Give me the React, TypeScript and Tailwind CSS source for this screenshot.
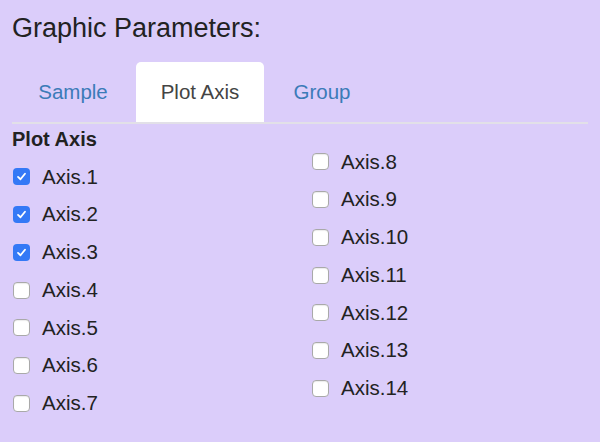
import React from "react";

const left = [
  { name: "Axis.1", on: true },
  { name: "Axis.2", on: true },
  { name: "Axis.3", on: true },
  { name: "Axis.4", on: false },
  { name: "Axis.5", on: false },
  { name: "Axis.6", on: false },
  { name: "Axis.7", on: false },
];

const right = ["Axis.8", "Axis.9", "Axis.10", "Axis.11", "Axis.12", "Axis.13", "Axis.14"].map((name) => ({
  name,
  on: false,
}));

function Box({ on }: { on: boolean }) {
  if (on) {
    return (
      <span className="flex h-[17px] w-[17px] shrink-0 items-center justify-center rounded-[4px] bg-[#3479f6]">
        <svg width="11" height="11" viewBox="0 0 12 12" fill="none">
          <path d="M2.2 6.4 4.9 9 9.8 3" stroke="white" strokeWidth="2" strokeLinecap="round" strokeLinejoin="round" />
        </svg>
      </span>
    );
  }
  return (
    <span className="h-[17px] w-[17px] shrink-0 rounded-[4px] border border-[#a9a9a9] bg-white shadow-[inset_0_1px_1px_rgba(0,0,0,0.08)]" />
  );
}

function Row({ name, on }: { name: string; on: boolean }) {
  return (
    <label className="flex h-[37.75px] items-center gap-[12px] pl-[1px]">
      <Box on={on} />
      <span className="text-[20.5px] text-[#222]">{name}</span>
    </label>
  );
}

export default function App() {
  return (
    <div className="h-[442px] w-[600px] bg-[#dbcdfa] px-3 pt-[13px] font-['Liberation_Sans',Arial,sans-serif] text-[#222]">
      <h2 className="text-[27px] leading-[31px] text-[#222]">Graphic Parameters:</h2>

      <div className="mt-[18px] flex h-[62px] items-stretch border-b-2 border-[#e2e0e8]">
        <div className="flex w-[122px] items-center justify-center text-[20.5px] text-[#3b7bb8]">Sample</div>
        <div className="ml-[2px] flex w-[128px] items-center justify-center rounded-t-[5px] bg-white text-[20.5px] text-[#444]">
          Plot Axis
        </div>
        <div className="ml-[2px] flex w-[112px] items-center justify-center text-[20.5px] text-[#3b7bb8]">Group</div>
      </div>

      <div className="grid grid-cols-2">
        <div className="pt-[4px]">
          <div className="text-[20px] font-bold leading-[23px] text-[#222]">Plot Axis</div>
          <div className="mt-[7px]">
            {left.map((r) => (
              <Row key={r.name} name={r.name} on={r.on} />
            ))}
          </div>
        </div>
        <div className="pl-[11px] pt-[19px]">
          {right.map((r) => (
            <Row key={r.name} name={r.name} on={r.on} />
          ))}
        </div>
      </div>
    </div>
  );
}
